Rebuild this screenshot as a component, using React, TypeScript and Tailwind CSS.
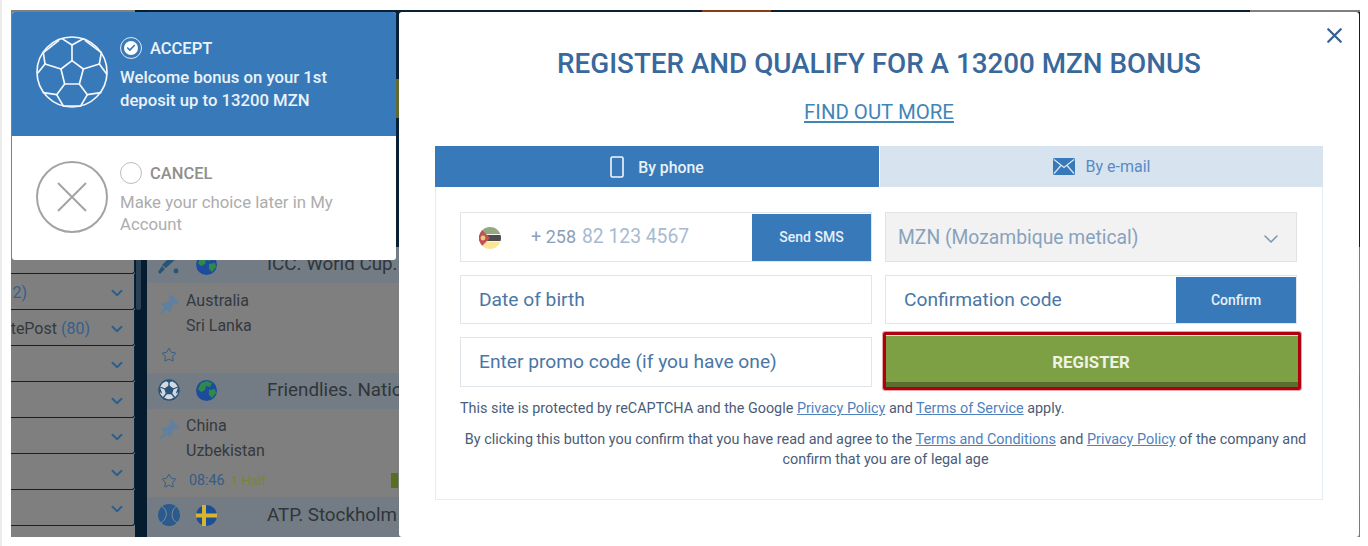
import React from "react";
import { ChevronDown, Star, X, Check } from "lucide-react";

const F = { fontFamily: "Roboto, 'Liberation Sans', sans-serif" };

function Ball() {
  return (
    <svg width="72" height="72" viewBox="108 108 216 216" fill="none" stroke="#f4f8fc" strokeWidth="5" strokeLinejoin="round" strokeLinecap="round">
      <circle cx="216" cy="216" r="105" />
      <path d="M216 182L250 207L238 252L194 252L183 207Z" />
      <path d="M216 182V135M250 207L298 192M238 252L262 284M194 252L170 284M183 207L135 192" />
      <path d="M186 116L216 135L250 116M135 192L130 158L176 122M298 192L304 158L256 122" />
      <path d="M135 192L114 218M298 192L320 222M170 284L130 278M262 284L302 278M170 284L190 318M262 284L242 318M190 318H242" />
    </svg>
  );
}

function Flag() {
  return (
    <svg width="22" height="22" viewBox="0 0 22 22">
      <defs>
        <clipPath id="mz"><circle cx="11" cy="11" r="11" /></clipPath>
      </defs>
      <g clipPath="url(#mz)">
        <rect width="22" height="7" fill="#93a97d" />
        <rect y="7" width="22" height="1" fill="#f4f4f4" />
        <rect y="8" width="22" height="6" fill="#4d4d4d" />
        <rect y="14" width="22" height="1" fill="#f4f4f4" />
        <rect y="15" width="22" height="7" fill="#fbe596" />
        <path d="M0 0L11 11L0 22Z" fill="#c2505a" />
        <circle cx="4" cy="11" r="2.4" fill="#e6cf70" />
      </g>
    </svg>
  );
}

function Globe() {
  return (
    <svg width="21" height="21" viewBox="0 0 21 21">
      <circle cx="10.5" cy="10.5" r="10.5" fill="#1d4c9c" />
      <path d="M5 3L11 1L16 3L14 7L10 6L9 10L5 12L2 9Z" fill="#2f8a4a" />
      <path d="M13 10L19 9L20 13L16 18L13 15Z" fill="#2f8a4a" />
    </svg>
  );
}

function Sweden() {
  return (
    <svg width="21" height="21" viewBox="0 0 21 21">
      <circle cx="10.5" cy="10.5" r="10.5" fill="#1d4f96" />
      <path d="M6 0H10V8.5H21V12.5H10V21H6V12.5H0V8.5H6Z" fill="#d7b52e" />
    </svg>
  );
}

function Pin() {
  return (
    <svg width="22" height="22" viewBox="0 0 20 20" fill="#5f80a0">
      <path d="M11 1L19 8L17 10L15.5 9L12 13L12.5 16L10.5 17.5L3 10L5 8.5L8 9L11.5 5L10 3Z" />
      <path d="M6 13L1 19L1.5 19.5L8 15Z" />
    </svg>
  );
}

function Cricket() {
  return (
    <svg width="22" height="22" viewBox="0 0 22 22" fill="#2a5378">
      <path d="M16 0L21 3L8 15L4 12Z" />
      <path d="M4 13L7 16L2 21L0 19Z" />
      <circle cx="18" cy="18" r="2.4" />
    </svg>
  );
}

function SmallBall() {
  return (
    <svg width="22" height="22" viewBox="0 0 22 22" fill="#d3d9de" stroke="#2a5378" strokeWidth="1.3">
      <circle cx="11" cy="11" r="10" />
      <path d="M11 7L15 10L13.5 14.5H8.5L7 10Z" fill="#2a5378" />
      <path d="M11 7V2M15 10L20 8M13.5 14.5L17 19M8.5 14.5L5 19M7 10L2 8" fill="none" />
      <path d="M8 1.5L11 3L14 1.5ZM1.5 9L3 13L1.5 12ZM20.5 9L19 13L20.5 12ZM5 19L9 20.5L6 20ZM17 19L13 20.5L16 20Z" fill="#2a5378" />
    </svg>
  );
}

function Tennis() {
  return (
    <svg width="22" height="22" viewBox="0 0 22 22" fill="none">
      <circle cx="11" cy="11" r="11" fill="#2a5a8e" />
      <path d="M4 2.5C10 6 10 14 3 19M18 2.5C12 8 13 16 19.5 19" stroke="#7f8c98" strokeWidth="1" />
    </svg>
  );
}

function SideRow({ label, pr }: { label?: React.ReactNode; pr?: string }) {
  return (
    <div className={`relative flex h-[36px] items-center justify-end overflow-hidden whitespace-nowrap rounded-br-[3px] border-b border-r border-[#0a2338] pt-[2px] text-[16px] text-[#33393f] ${pr ?? "pr-[44px]"}`}>
      {label}
      <ChevronDown size={18} strokeWidth={2.6} className="absolute right-[8px] top-[10px] text-[#2b5f8f]" />
    </div>
  );
}

function LeagueHead({ icon, flag, title, h }: { icon: React.ReactNode; flag: React.ReactNode; title: string; h: string }) {
  return (
    <div className={`flex items-center whitespace-nowrap bg-[#737c84] pl-[11px] text-[18.8px] text-[#30353a] ${h}`}>
      <span className="flex w-[38px]">{icon}</span>
      <span className="flex w-[71px]">{flag}</span>
      {title}
    </div>
  );
}

function Match({ a, b, h, pt, mt, time }: { a: string; b: string; h: string; pt: string; mt: string; time?: boolean }) {
  return (
    <div className={`flex flex-col pl-[11px] text-[16px] leading-[25px] text-[#33393f] ${h} ${pt}`}>
      <div className="flex">
        <span className="mr-[6px] mt-[5px]"><Pin /></span>
        <div>
          <div>{a}</div>
          <div>{b}</div>
        </div>
      </div>
      <div className={`flex items-center whitespace-nowrap pl-[3px] ${mt}`}>
        <Star size={16} strokeWidth={1.5} className="text-[#355d82]" />
        {time && <span className="ml-[12px] text-[14.3px] text-[#345c88]">08:46</span>}
        {time && <span className="ml-[6px] text-[13.3px] text-[#76853a]">1 Half</span>}
        {time && <span className="ml-[125px] h-[15px] w-[7px] bg-[#55701f]" />}
      </div>
    </div>
  );
}

function Field({ children }: { children: React.ReactNode }) {
  return (
    <div className="flex h-full items-center border border-[#dfe5e9] bg-white pt-px text-[19.2px] text-[#4a76a6]">{children}</div>
  );
}

export default function App() {
  return (
    <div style={F} className="h-[546px] w-[1368px] overflow-hidden border-l-2 border-[#ececec] bg-white pl-[9px] pt-[10px]">
      <div className="relative h-[527px] w-[1349px] overflow-hidden bg-[#7f7f7f]">
        {/* dimmed page */}
        <div className="flex h-full">
          <div className="w-[124px] shrink-0 pt-[228px]">
            <SideRow />
            <SideRow pr="pr-[107px]" label={<span className="text-[#34608c]">2)</span>} />
            <SideRow label={<>tePost <span className="ml-[4px] text-[#34608c]">(80)</span></>} />
            <SideRow />
            <SideRow />
            <SideRow />
            <SideRow />
            <SideRow />
          </div>
          <div className="relative w-[12px] shrink-0 bg-[#051c2f]">
            <div className="absolute left-[1px] top-[200px] h-[100px] w-[5px] rounded-[3px] bg-[#2a4153]" />
          </div>
          <div className="flex w-[1213px] flex-col">
            <div className="flex h-[2px] shrink-0">
              <div className="w-[555px] bg-[#0a2036]" />
              <div className="w-[69px] bg-[#8a3c12]" />
              <div className="w-[479px] bg-[#0a2036]" />
            </div>
            <div className="h-[235px] shrink-0 bg-[#0a2036] pl-[249px] pt-[67px]">
              <div className="h-[39px] w-[3px] bg-[#5f6b2f]" />
            </div>
            <LeagueHead h="h-[36px] shrink-0 pb-[2px]" icon={<Cricket />} flag={<Globe />} title="ICC. World Cup. Men" />
            <Match h="h-[90px] shrink-0" pt="pt-[5px]" mt="mt-[9px]" a="Australia" b="Sri Lanka" />
            <LeagueHead h="h-[36px] shrink-0 pb-[2px]" icon={<SmallBall />} flag={<Globe />} title="Friendlies. National Teams" />
            <Match h="h-[88px] shrink-0" pt="pt-[4px]" mt="mt-[5px]" a="China" b="Uzbekistan" time />
            <LeagueHead h="h-[40px] shrink-0 pb-[4px]" icon={<Tennis />} flag={<Sweden />} title="ATP. Stockholm" />
          </div>
        </div>

        {/* bonus choice panel */}
        <div className="absolute left-[1px] top-[2px] w-[384px] overflow-hidden rounded-[3px] bg-white">
          <div className="flex h-[124px] bg-[#387ab9] pl-[24px] pt-[24px] text-[#eaf2fa]">
            <div className="w-[84px] shrink-0"><Ball /></div>
            <div>
              <div className="flex h-[24px] items-center">
                <span className="mr-[8px] flex h-[22px] w-[22px] items-center justify-center rounded-full border border-[#dfeaf5]">
                  <span className="flex h-[14px] w-[14px] items-center justify-center rounded-full bg-white">
                    <Check size={10} strokeWidth={4} className="text-[#387ab9]" />
                  </span>
                </span>
                <span className="pt-[2px] text-[16.5px] font-medium">ACCEPT</span>
              </div>
              <div className="mt-[6px] text-[16.7px] font-medium leading-[23px]">
                Welcome bonus on your 1st<br />deposit up to 13200 MZN
              </div>
            </div>
          </div>
          <div className="flex h-[124px] pl-[24px] pt-[25px]">
            <div className="w-[84px] shrink-0">
              <svg width="72" height="72" viewBox="0 0 72 72" fill="none" stroke="#a3a3a3" strokeWidth="2">
                <circle cx="36" cy="36" r="35" />
                <path d="M22 22L50 50M50 22L22 50" />
              </svg>
            </div>
            <div>
              <div className="flex h-[24px] items-center">
                <span className="mr-[8px] h-[22px] w-[22px] rounded-full border border-[#bdbdbd]" />
                <span className="pt-[2px] text-[16.5px] font-medium text-[#8f8f8f]">CANCEL</span>
              </div>
              <div className="mt-[6px] w-[250px] text-[16.8px] leading-[22px] text-[#adadad]">
                Make your choice later in My Account
              </div>
            </div>
          </div>
        </div>

        {/* register modal */}
        <div className="absolute left-[388px] top-[2px] h-[525px] w-[960px] rounded-[3px] bg-white px-[36px] pt-[32px]">
          <X size={25} strokeWidth={2.2} className="absolute right-[12px] top-[11px] text-[#38618e]" />
          <h1 className="h-[40px] text-center text-[27.8px] font-medium leading-[40px] text-[#38689c]">
            REGISTER AND QUALIFY FOR A 13200 MZN BONUS
          </h1>
          <div className="mt-[14px] h-[28px] text-center text-[20.4px] leading-[28px] text-[#3f86b8] underline underline-offset-2">
            FIND OUT MORE
          </div>
          <div className="mt-[20px] w-[888px]">
            <div className="flex h-[41px]">
              <div className="flex w-[444px] items-center justify-center bg-[#387ab9] text-[15.8px] font-medium text-[#e8f1f9]">
                <svg width="14" height="22" viewBox="0 0 14 22" fill="none" stroke="#f2f7fb" strokeWidth="1.6" className="mr-[14px]">
                  <rect x="1" y="1" width="12" height="20" rx="1.5" />
                </svg>
                <span className="pt-[2px]">By phone</span>
              </div>
              <div className="ml-px flex flex-1 items-center justify-center bg-[#d7e4f0] text-[16px] text-[#5a8ac4]">
                <svg width="22" height="17" viewBox="0 0 22 17" className="mr-[11px]">
                  <rect width="22" height="17" rx="1.5" fill="#387ab9" />
                  <path d="M1 1.5L11 9.5L21 1.5M1 15.5L8 7.5M21 15.5L14 7.5" fill="none" stroke="#d7e4f0" strokeWidth="1.3" />
                </svg>
                By e-mail
              </div>
            </div>
            <div className="h-[313px] border border-t-0 border-[#e3edf5] px-[24px] pt-[25px]">
              <div className="grid w-[838px] grid-cols-[412px_412px] grid-rows-[50px_49px_50px] gap-x-[13px] gap-y-[13px]">
                <Field>
                  <span className="ml-[18px] flex"><Flag /></span>
                  <span className="mb-[3px] ml-[30px] text-[18px] text-[#8aa0ba]">+ 258</span>
                  <span className="ml-[6px] flex-1 whitespace-nowrap text-[19.3px] text-[#a8bad0]">82 123 4567</span>
                  <span className="flex h-full w-[119px] items-center justify-center bg-[#387ab9] text-[14px] font-medium text-[#e6eff8]">Send SMS</span>
                </Field>
                <div className="flex h-full items-center justify-between border border-[#dfe3e5] bg-[#f2f2f2] pl-[12px] pr-[13px] pt-[2px] text-[19.3px] text-[#88a2bd]">
                  <span>MZN (Mozambique metical)</span>
                  <ChevronDown size={24} strokeWidth={1.6} className="mt-[2px] text-[#7f97ad]" />
                </div>
                <Field><span className="ml-[18px]">Date of birth</span></Field>
                <Field>
                  <span className="ml-[18px] flex-1">Confirmation code</span>
                  <span className="flex h-full w-[120px] items-center justify-center bg-[#387ab9] text-[14px] font-medium text-[#e6eff8]">Confirm</span>
                </Field>
                <Field><span className="ml-[18px]">Enter promo code (if you have one)</span></Field>
                <div className="-mb-[3px] -ml-[2px] -mr-[4px] -mt-[5px] flex h-[58px] flex-col rounded-[2px] border-[3px] border-[#b0000f] ring-1 ring-[#e3a5a5]">
                  <div className="flex flex-1 items-center justify-center border-b-[5px] border-t border-b-[#5b6e30] border-t-[#e3e8da] bg-[#7ea044] pr-[2px] pt-[8px] text-[16.8px] font-bold text-[#eef3e6]">
                    REGISTER
                  </div>
                </div>
              </div>
              <p className="mt-[12px] text-[14.38px] leading-[20px] text-[#4a5c78]">
                This site is protected by reCAPTCHA and the Google <a className="text-[#4f82bd] underline">Privacy Policy</a> and <a className="text-[#4f82bd] underline">Terms of Service</a> apply.
              </p>
              <p className="-mr-[13px] mt-[11px] text-center text-[14.4px] leading-[20px] text-[#4a5c78]">
                By clicking this button you confirm that you have read and agree to the <a className="text-[#4f82bd] underline">Terms and Conditions</a> and <a className="text-[#4f82bd] underline">Privacy Policy</a> of the company and<br />confirm that you are of legal age
              </p>
            </div>
          </div>
        </div>
      </div>
    </div>
  );
}
